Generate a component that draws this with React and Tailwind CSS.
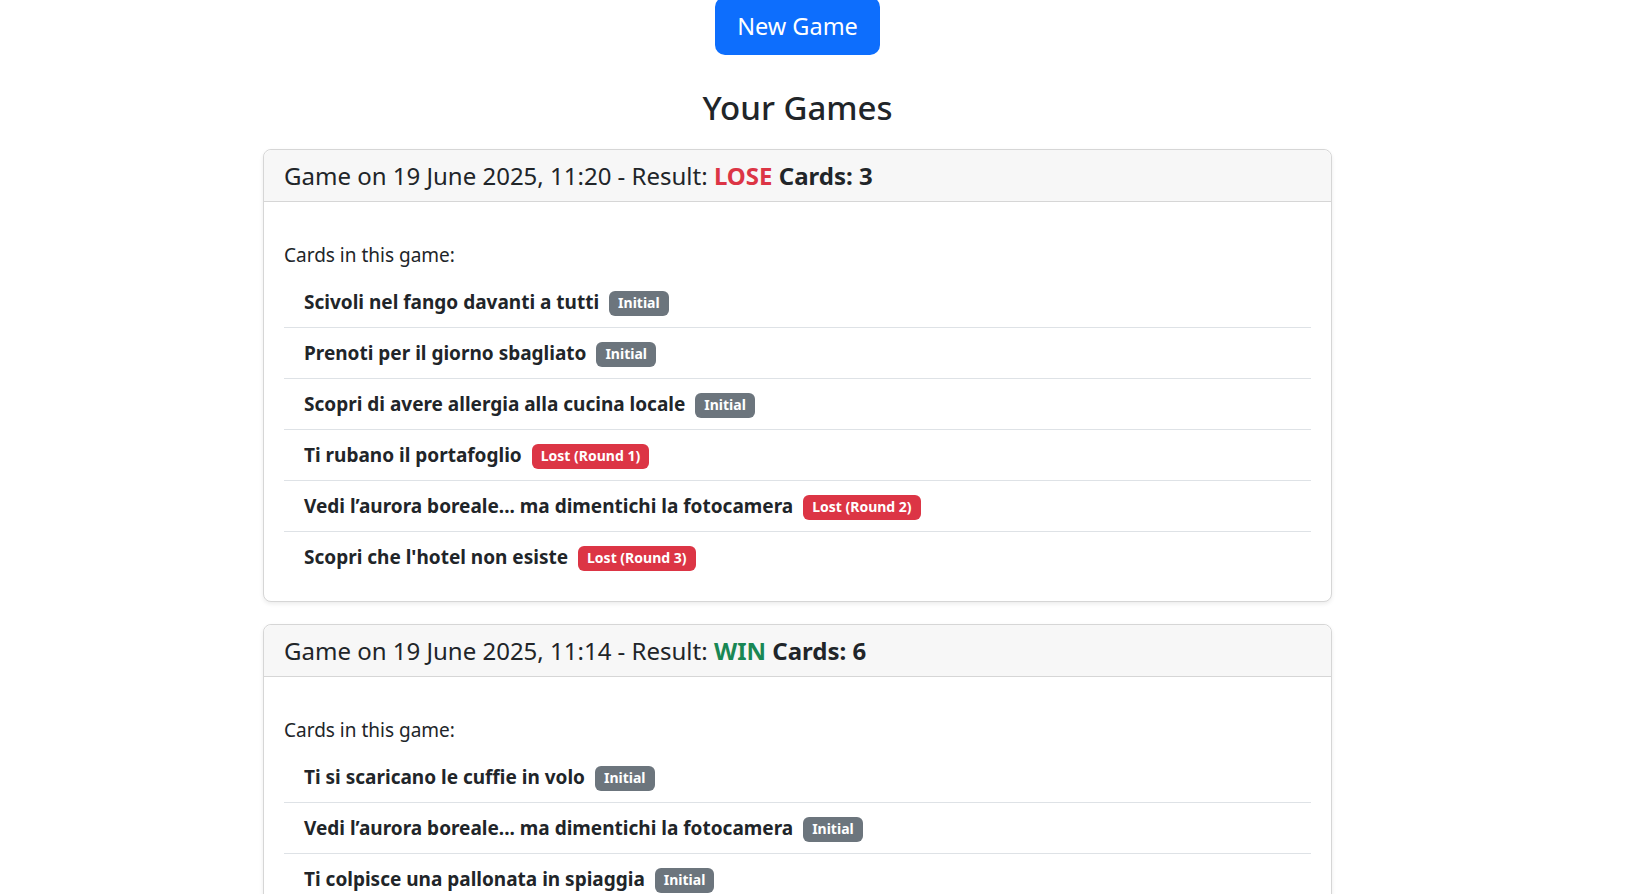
import React from "react";

const games = [
  {
    id: 1,
    date: "19 June 2025, 11:20",
    result: "LOSE",
    count: 3,
    cards: [
      { title: "Scivoli nel fango davanti a tutti", status: "Initial" },
      { title: "Prenoti per il giorno sbagliato", status: "Initial" },
      { title: "Scopri di avere allergia alla cucina locale", status: "Initial" },
      { title: "Ti rubano il portafoglio", status: "Lost (Round 1)" },
      { title: "Vedi l’aurora boreale... ma dimentichi la fotocamera", status: "Lost (Round 2)" },
      { title: "Scopri che l'hotel non esiste", status: "Lost (Round 3)" },
    ],
  },
  {
    id: 2,
    date: "19 June 2025, 11:14",
    result: "WIN",
    count: 6,
    cards: [
      { title: "Ti si scaricano le cuffie in volo", status: "Initial" },
      { title: "Vedi l’aurora boreale... ma dimentichi la fotocamera", status: "Initial" },
      { title: "Ti colpisce una pallonata in spiaggia", status: "Initial" },
    ],
  },
];

function StatusBadge({ status }) {
  const color =
    status === "Initial"
      ? "bg-[#6c757d]"
      : status.startsWith("Lost")
      ? "bg-[#dc3545]"
      : "bg-[#198754]";
  return (
    <span
      className={`${color} ml-[10px] mt-[2px] inline-block rounded-[6px] px-[9px] py-[5.5px] text-[14px] font-bold leading-none text-white`}
    >
      {status}
    </span>
  );
}

function GameCard({ game }) {
  const win = game.result === "WIN";
  return (
    <div className="mb-[22px] w-full rounded-[8px] border border-[#d6d6d6] bg-white shadow-[0_2px_4px_rgba(0,0,0,0.08)]">
      <div className="rounded-t-[8px] border-b border-[#d6d6d6] bg-[#f7f7f7] px-[20px] py-[10px]">
        <h5 className="text-[24px] leading-[31px] text-[#212529]">
          Game on {game.date} - Result:{" "}
          <span className={`font-bold ${win ? "text-[#198754]" : "text-[#dc3545]"}`}>
            {game.result}
          </span>{" "}
          <span className="font-bold">Cards: {game.count}</span>
        </h5>
      </div>
      <div className="px-[20px] pb-[19px] pt-[38px]">
        <p className="mb-[7px] text-[19px] leading-[30px] text-[#212529]">Cards in this game:</p>
        <ul>
          {game.cards.map((c, i) => (
            <li
              key={i}
              className={`flex items-center px-[20px] py-[10px] ${
                i < game.cards.length - 1 ? "border-b border-[#dee2e6]" : ""
              }`}
            >
              <span className="text-[19px] font-bold leading-[30px] text-[#212529]">{c.title}</span>
              <StatusBadge status={c.status} />
            </li>
          ))}
        </ul>
      </div>
    </div>
  );
}

export default function App() {
  return (
    <div
      className="min-h-screen bg-white pr-[39px]"
      style={{ fontFamily: '"Noto Sans", "Open Sans", sans-serif' }}
    >
      <div className="mx-auto flex w-[1069px] flex-col items-center">
        <button
          type="button"
          className="-mt-[3px] rounded-[10px] bg-[#0d6efd] px-[22px] py-[10px] text-[23.5px] leading-[38px] text-white"
        >
          New Game
        </button>
        <h2 className="mt-[32px] mb-[20px] text-[33px] font-medium leading-[42px] text-[#212529]">
          Your Games
        </h2>
        {games.map((g) => (
          <GameCard key={g.id} game={g} />
        ))}
      </div>
    </div>
  );
}
